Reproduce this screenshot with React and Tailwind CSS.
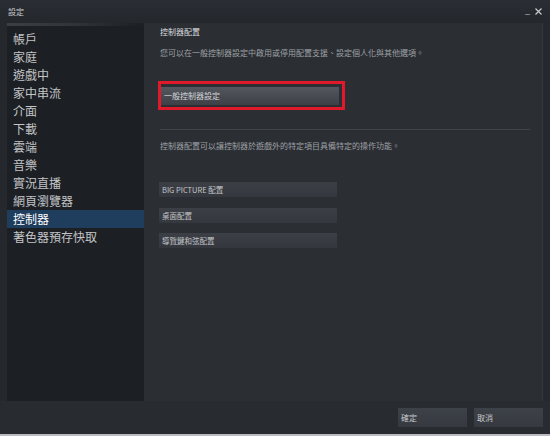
import React from 'react';

const navItems = [
  '帳戶',
  '家庭',
  '遊戲中',
  '家中串流',
  '介面',
  '下載',
  '雲端',
  '音樂',
  '實況直播',
  '網頁瀏覽器',
  '控制器',
  '著色器預存快取',
];

const font = { fontFamily: '"Noto Sans CJK TC", "Liberation Sans", sans-serif' };

const SteamButton = ({ children, className = '' }) => (
  <button
    className={`flex items-center w-[178px] h-[15px] pl-[3px] text-[7.5px] text-[#c4c6c9] bg-gradient-to-b from-[#3c4046] to-[#34373d] ${className}`}
  >
    {children}
  </button>
);

export default function App() {
  return (
    <div
      className="w-[550px] h-[436px] flex flex-col bg-[#25282d] overflow-hidden"
      style={font}
    >
      {/* title bar */}
      <div className="h-[23px] flex items-center justify-between pl-[8px] pr-[8px] bg-gradient-to-b from-[#2a2e34] to-[#24272c]">
        <span className="text-[8px] text-[#c9cacc]">設定</span>
        <div className="flex items-center gap-[5px] text-[#c0c2c5]">
          <span className="text-[9px] leading-none -mt-[2px]">_</span>
          <svg width="7" height="7" viewBox="0 0 7 7">
            <path d="M0.5 0.5L6.5 6.5M6.5 0.5L0.5 6.5" stroke="#c8cacd" strokeWidth="1.2" />
          </svg>
        </div>
      </div>

      {/* main */}
      <div className="flex h-[378px] pl-[7px] pr-[7px]">
        {/* sidebar */}
        <div className="w-[137px] bg-[#1c1f23] flex flex-col">
          <div className="h-[3px] bg-gradient-to-r from-[#3b3f46] via-[#30343a] to-[#1c1f23]" />
          <div className="pt-[4px] flex flex-col">
            {navItems.map((item) => (
              <div
                key={item}
                className={`h-[18px] flex items-center pl-[6px] text-[12px] leading-none ${
                  item === '控制器' ? 'bg-[#1f3d5d] text-white' : 'text-[#c3c5c8]'
                }`}
              >
                {item}
              </div>
            ))}
          </div>
        </div>

        {/* content */}
        <div className="flex-1 bg-[#2b2e33] border-r border-[#34373d] pl-[16px] pr-[12px] pt-[2px] flex flex-col">
          <div className="text-[8px] text-[#dcdddf] h-[12px] flex items-center mt-[1px]">控制器配置</div>
          <div className="text-[8px] text-[#9ea1a5] mt-[9px]">
            您可以在一般控制器設定中啟用或停用配置支援、設定個人化與其他選項。
          </div>

          <div className="mt-[22px] -ml-[2px] w-[187px] h-[29px] border-[3px] border-[#e01a2b] flex items-center">
            <button className="flex items-center w-[178px] h-[18px] pl-[3px] text-[8px] text-[#d4d6d8] bg-gradient-to-b from-[#53575e] to-[#3d4046]">
              一般控制器設定
            </button>
          </div>

          <div className="mt-[19px] h-[1px] bg-[#40444a]" />

          <div className="text-[8px] text-[#9ea1a5] mt-[10px]">
            控制器配置可以讓控制器於遊戲外的特定項目具備特定的操作功能。
          </div>

          <SteamButton className="mt-[30px] -ml-[1px]">BIG PICTURE 配置</SteamButton>
          <SteamButton className="mt-[11px] -ml-[1px]">桌面配置</SteamButton>
          <SteamButton className="mt-[10px] -ml-[1px]">導覽鍵和弦配置</SteamButton>
        </div>
      </div>

      {/* footer */}
      <div className="flex-1 flex items-start justify-end gap-[7px] pr-[7px] pt-[7px] bg-[#282b30] border-b-2 border-[#b9bbbe]">
        <button className="w-[69px] h-[19px] flex items-center pl-[3px] text-[8px] text-[#c8cacd] bg-gradient-to-b from-[#3d4148] to-[#363a40]">
          確定
        </button>
        <button className="w-[69px] h-[19px] flex items-center pl-[3px] text-[8px] text-[#c8cacd] bg-gradient-to-b from-[#3d4148] to-[#363a40]">
          取消
        </button>
      </div>
    </div>
  );
}
